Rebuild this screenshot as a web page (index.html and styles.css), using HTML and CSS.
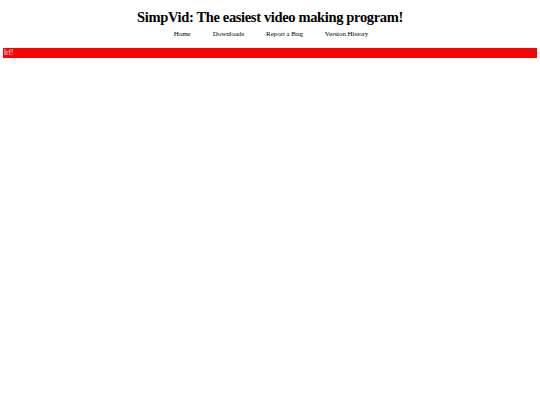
FILE: index.html
```html
<!DOCTYPE html>
<html>
<head>
<meta charset="utf-8">
<link rel="stylesheet" href="styles.css">
</head>
<body>
<header class="top">
  <h1 class="title">SimpVid: The easiest video making program!</h1>
  <nav class="nav">
    <a class="nav-link">Home</a>
    <a class="nav-link">Downloads</a>
    <a class="nav-link">Report a Bug</a>
    <a class="nav-link">Version History</a>
  </nav>
</header>
<div class="bar">lrf!</div>
</body>
</html>
```
FILE: styles.css
```css
html, body {
  margin: 0;
  padding: 0;
  background: #fff;
}
body {
  font-family: "Liberation Serif", "Times New Roman", serif;
  color: #000;
  padding: 0 3px;
}
.top {
  text-align: center;
}
.title {
  margin: 0;
  padding-top: 8px;
  font-size: 14.5px;
  letter-spacing: -0.35px;
  line-height: 18px;
  font-weight: bold;
}
.nav {
  display: flex;
  justify-content: center;
  gap: 22px;
  margin-top: 4px;
  padding-left: 2px;
  font-size: 7px;
  letter-spacing: -0.05px;
  line-height: 9px;
}
.nav-link {
  color: #000;
}
.bar {
  margin-top: 9px;
  background: #ff0000;
  color: #fff;
  font-size: 7.5px;
  line-height: 10px;
  height: 10px;
  padding-left: 1px;
}
```
